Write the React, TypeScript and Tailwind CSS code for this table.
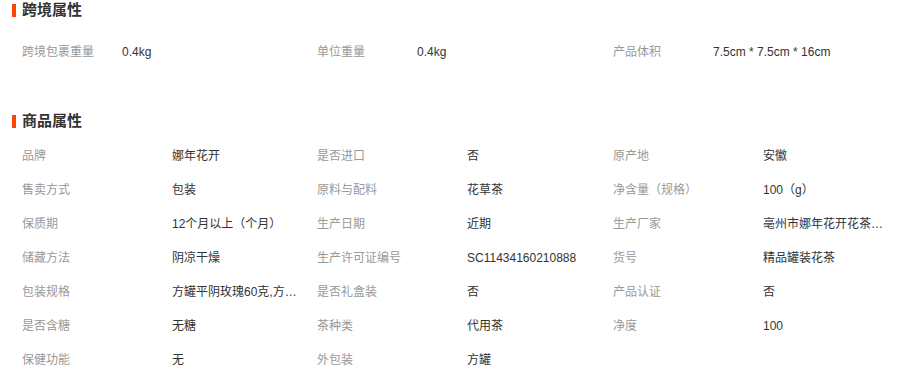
const FONT = { fontFamily: '"Liberation Sans", "Noto Sans CJK SC", sans-serif' };

type Attr = [string, string];

const crossBorder: Attr[] = [
  ["跨境包裹重量", "0.4kg"],
  ["单位重量", "0.4kg"],
  ["产品体积", "7.5cm * 7.5cm * 16cm"],
];

const goods: Attr[] = [
  ["品牌", "娜年花开"],
  ["是否进口", "否"],
  ["原产地", "安徽"],
  ["售卖方式", "包装"],
  ["原料与配料", "花草茶"],
  ["净含量（规格）", "100（g）"],
  ["保质期", "12个月以上（个月）"],
  ["生产日期", "近期"],
  ["生产厂家", "亳州市娜年花开花茶有限公司"],
  ["储藏方法", "阴凉干燥"],
  ["生产许可证编号", "SC11434160210888"],
  ["货号", "精品罐装花茶"],
  ["包装规格", "方罐平阴玫瑰60克,方罐重瓣玫瑰"],
  ["是否礼盒装", "否"],
  ["产品认证", "否"],
  ["是否含糖", "无糖"],
  ["茶种类", "代用茶"],
  ["净度", "100"],
  ["保健功能", "无"],
  ["外包装", "方罐"],
];

function Heading({ title }: { title: string }) {
  return (
    <div className="h-5 flex items-center">
      <span className="w-[4px] h-[13px] bg-[#ff4400]" />
      <span className="ml-[6px] text-[15px] font-bold text-[#333]">{title}</span>
    </div>
  );
}

export default function App() {
  return (
    <div className="w-[923px] h-[378px] bg-white pl-3 overflow-hidden text-xs" style={FONT}>
      <Heading title="跨境属性" />
      <div className="pl-[10px] pt-[15px] grid grid-cols-[295px_296px_296px]">
        {crossBorder.map(([k, v]) => (
          <div key={k} className="h-[34px] flex items-center">
            <span className="w-[100px] text-[#999]">{k}</span>
            <span className="text-[#333]">{v}</span>
          </div>
        ))}
      </div>

      <div className="mt-[42px]">
        <Heading title="商品属性" />
      </div>
      <div className="pl-[10px] pt-[8px] grid grid-cols-[295px_296px_296px]">
        {goods.map(([k, v]) => (
          <div key={k} className="h-[34px] flex items-center">
            <span className="w-[150px] shrink-0 text-[#999]">{k}</span>
            <span className="w-[126px] truncate text-[#333]">{v}</span>
          </div>
        ))}
      </div>
    </div>
  );
}
